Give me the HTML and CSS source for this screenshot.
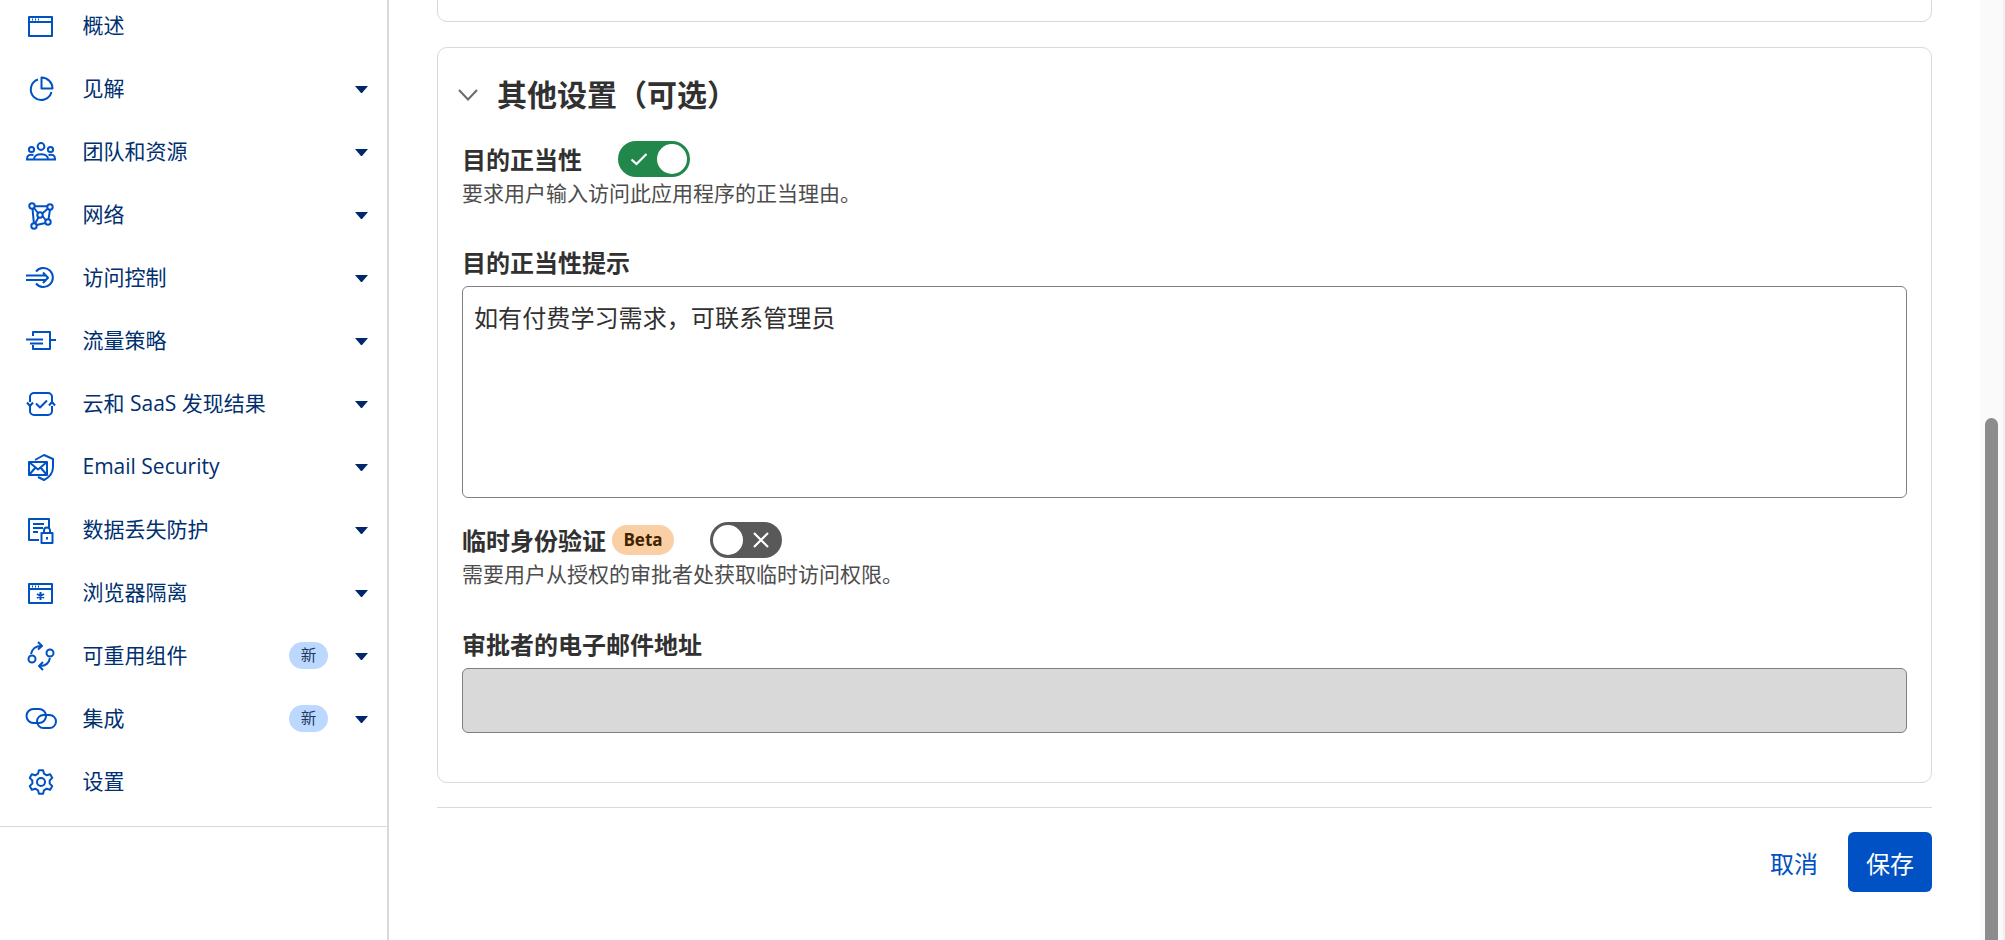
FILE: index.html
```html
<!DOCTYPE html>
<html lang="zh-CN">
<head>
<meta charset="utf-8">
<title>其他设置</title>
<link rel="stylesheet" href="styles.css">
</head>
<body>
<aside class="sidebar">
  <nav class="nav">
    <a class="nav-row"><svg class="nav-icon" viewBox="0 0 32 32"><rect x="4" y="7" width="23" height="19"/><path d="M4 12H27M7 9.500H8M10 9.500H11M13 9.500H14"/></svg><span class="nav-label">概述</span></a>
    <a class="nav-row"><svg class="nav-icon" viewBox="0 0 32 32"><path d="M13 6.500A10.500 10.500 0 1 0 26.500 19"/><path d="M16.500 4.500A11 11 0 0 1 27.500 15.500H16.500Z"/></svg><span class="nav-label">见解</span><i class="caret"></i></a>
    <a class="nav-row"><svg class="nav-icon" viewBox="0 0 32 32"><circle cx="16" cy="10.500" r="3.400"/><circle cx="6.500" cy="13.500" r="2.600"/><circle cx="25.500" cy="13.500" r="2.600"/><path d="M1 23.500H31M9 23C9 16.500 23 16.500 23 23M2 23C2 19 5 18 8.500 19M30 23C30 19 27 18 23.500 19"/></svg><span class="nav-label">团队和资源</span><i class="caret"></i></a>
    <a class="nav-row"><svg class="nav-icon" viewBox="0 0 32 32"><circle cx="7" cy="7" r="2.700"/><circle cx="25" cy="8" r="2.700"/><circle cx="23" cy="23" r="2.700"/><circle cx="9" cy="27" r="2.700"/><circle cx="15" cy="16" r="2.700"/><path d="M9.700 7.200H22.300M7.500 9.700L8.900 24.300M25 10.700L23.500 20.300M11.500 26L20.500 24M9 9L13 14M17.200 14.500L23 9.500M17.500 17L21 21.500M13.500 18.500L10 24.500"/></svg><span class="nav-label">网络</span><i class="caret"></i></a>
    <a class="nav-row"><svg class="nav-icon" viewBox="0 0 32 32"><path d="M11 9.500A9.500 9.500 0 1 1 11 21.500"/><path d="M1 13.500H21.500M1 18H21.500M18 10.500L23 15.700L18 21"/></svg><span class="nav-label">访问控制</span><i class="caret"></i></a>
    <a class="nav-row"><svg class="nav-icon" viewBox="0 0 32 32"><path d="M8 11V7H25V24H8V20M25 15H31M1 14.500H18M5 18.500H18"/></svg><span class="nav-label">流量策略</span><i class="caret"></i></a>
    <a class="nav-row"><svg class="nav-icon" viewBox="0 0 32 32"><path d="M5 14V9A4 4 0 0 1 9 5H23A4 4 0 0 1 27 9V14M5 18V23A4 4 0 0 0 9 27H23A4 4 0 0 0 27 23V18M2 14.500L5 18L8 14.500M24 17.500L27 14L30 17.500M11 15.500L15 19.500L22 12.500"/></svg><span class="nav-label">云和 SaaS 发现结果</span><i class="caret"></i></a>
    <a class="nav-row"><svg class="nav-icon" viewBox="0 0 32 32"><path d="M10 9L19 4L28 8V16C28 23 23 27 19 29L13 26"/><rect x="4" y="11" width="18" height="13"/><path d="M4 11L13 18.500L22 11M4 24L10.500 16.500M22 24L15.500 16.500"/></svg><span class="nav-label">Email Security</span><i class="caret"></i></a>
    <a class="nav-row"><svg class="nav-icon" viewBox="0 0 32 32"><path d="M14 26H4V5H24V15M8 10H19M8 14H18M8 18H13"/><rect x="16.500" y="19" width="11" height="10"/><path d="M19 19V16.500A3 3 0 0 1 25 16.500V19M22 23V25.500"/></svg><span class="nav-label">数据丢失防护</span><i class="caret"></i></a>
    <a class="nav-row"><svg class="nav-icon" viewBox="0 0 32 32"><rect x="4" y="7" width="23" height="19"/><path d="M4 12H27M7 9.500H8M10 9.500H11M13 9.500H14M15.500 15V23M12 17L19 21M19 17L12 21"/></svg><span class="nav-label">浏览器隔离</span><i class="caret"></i></a>
    <a class="nav-row"><svg class="nav-icon" viewBox="0 0 32 32"><circle cx="7" cy="19" r="3.500"/><circle cx="25" cy="13" r="3.500"/><path d="M6 14C7 9 11 6 16 6M13 2L17 6L13 9.500M25 18C24 23 21 26 15 26M18 22L14 26L18 30"/></svg><span class="nav-label">可重用组件</span><span class="new-badge">新</span><i class="caret"></i></a>
    <a class="nav-row"><svg class="nav-icon" viewBox="0 0 32 32"><rect x="1.500" y="6" width="19.500" height="14" rx="7"/><rect x="12" y="12" width="19" height="13" rx="6.500"/></svg><span class="nav-label">集成</span><span class="new-badge">新</span><i class="caret"></i></a>
    <a class="nav-row"><svg class="nav-icon" viewBox="0 0 32 32"><polygon points="13,7.730 13.920,4.180 18.080,4.180 19,7.730 21.660,9.260 25.190,8.280 27.280,11.900 24.670,14.470 24.670,17.530 27.280,20.100 25.190,23.710 21.660,22.740 19,24.270 18.080,27.820 13.920,27.820 13,24.270 10.340,22.740 6.810,23.710 4.720,20.100 7.330,17.530 7.330,14.470 4.720,11.900 6.810,8.280 10.340,9.260"/><circle cx="16" cy="16" r="4"/></svg><span class="nav-label">设置</span></a>
  </nav>
</aside>
<main class="main">
  <div class="card card-prev"></div>
  <section class="card">
    <header class="card-head">
      <svg class="chevron" viewBox="0 0 20 12"><path d="M1 1L10 10.500L19 1"/></svg>
      <h2 class="card-title">其他设置（可选）</h2>
    </header>
    <div class="toggle-row toggle-row-first">
      <span class="field-label">目的正当性</span>
      <span class="toggle toggle-on">
        <svg class="toggle-mark" viewBox="0 0 16 16"><path d="M0.500 8.500L5.500 13L15.500 3"/></svg>
        <i class="knob"></i>
      </span>
    </div>
    <p class="help">要求用户输入访问此应用程序的正当理由。</p>
    <label class="field-label field-block">目的正当性提示</label>
    <textarea class="textarea" readonly>如有付费学习需求，可联系管理员</textarea>
    <div class="toggle-row">
      <span class="field-label">临时身份验证</span>
      <span class="beta">Beta</span>
      <span class="toggle toggle-off">
        <i class="knob"></i>
        <svg class="toggle-mark" viewBox="0 0 16 16"><path d="M1 1L15 15M15 1L1 15"/></svg>
      </span>
    </div>
    <p class="help">需要用户从授权的审批者处获取临时访问权限。</p>
    <label class="field-label field-block field-block-email">审批者的电子邮件地址</label>
    <input class="input" type="text" disabled>
  </section>
  <div class="rule"></div>
  <footer class="actions">
    <a class="cancel">取消</a>
    <button class="save" type="button">保存</button>
  </footer>
</main>
<div class="scroll-track"><div class="scroll-thumb"></div></div>
</body>
</html>
```
FILE: styles.css
```css
* { box-sizing: border-box; }
html, body { height: 100%; }
body {
  margin: 0;
  height: 940px;
  overflow: hidden;
  display: flex;
  background: #fff;
  color: #313131;
  font-family: "Open Sans", "Noto Sans CJK SC", sans-serif;
  font-size: 21px;
}
.sidebar {
  flex: 0 0 389px;
  height: 940px;
  border-right: 2px solid #d9d9d9;
  overflow: hidden;
}
.nav {
  margin-top: -6px;
  padding-bottom: 13px;
  border-bottom: 1px solid #d9d9d9;
}
.nav-row {
  height: 63px;
  padding: 0 19px 0 25px;
  display: flex;
  align-items: center;
  color: #00306f;
}
.nav-icon {
  flex: 0 0 32px;
  width: 32px;
  height: 32px;
  margin-right: 25.500px;
  fill: none;
  stroke: #0051c3;
  stroke-width: 2;
  stroke-linejoin: round;
}
.nav-label {
  flex: 1;
  padding-bottom: 2px;
  white-space: nowrap;
  line-height: 28px;
}
.caret {
  flex: 0 0 13px;
  height: 0;
  margin-top: 2px;
  border-left: 6.500px solid transparent;
  border-right: 6.500px solid transparent;
  border-top: 7px solid #00266b;
}
.new-badge {
  width: 39px;
  height: 27px;
  margin-right: 27px;
  border-radius: 14px;
  background: #bcd8ff;
  color: #1f3a5f;
  font-size: 15.600px;
  line-height: 27px;
  text-align: center;
}
.main {
  flex: 1;
  min-width: 0;
  padding: 0 48px;
}
.card {
  height: 736px;
  margin-bottom: 24px;
  padding: 27px 24px 0;
  border: 1px solid #d9d9d9;
  border-radius: 10px;
}
.card-prev {
  height: 42px;
  margin-top: -20px;
  margin-bottom: 25px;
  padding: 0;
}
.card-head {
  height: 40px;
  display: flex;
  align-items: center;
}
.chevron {
  width: 20px;
  height: 12px;
  margin: 0 0 0 -4px;
  fill: none;
  stroke: #6a6a6a;
  stroke-width: 2;
}
.card-title {
  margin: 0 0 0 19px;
  font-size: 30px;
  line-height: 40px;
  font-weight: 700;
}
.toggle-row {
  height: 36px;
  margin-top: 24px;
  display: flex;
  align-items: center;
}
.toggle-row .field-label { padding-top: 2px; }
.toggle-row-first { margin-top: 26px; }
.field-label {
  font-size: 24px;
  line-height: 32px;
  font-weight: 700;
}
.field-block {
  display: block;
  margin-top: 40px;
  margin-bottom: 7px;
}
.field-block-email { margin-top: 41px; margin-bottom: 7px; }
.help {
  margin: 2px 0 0;
  font-size: 21px;
  line-height: 28px;
  color: #4d4d4d;
}
.toggle {
  width: 72px;
  height: 36px;
  margin-left: 36px;
  padding: 0 3px;
  border-radius: 18px;
  display: flex;
  align-items: center;
}
.toggle-on { background: #22874a; padding-left: 13px; justify-content: space-between; }
.toggle-off { background: #595959; padding-right: 13px; justify-content: space-between; }
.toggle-mark {
  width: 16px;
  height: 16px;
  fill: none;
  stroke: #fff;
  stroke-width: 2.200;
}
.knob {
  width: 30px;
  height: 30px;
  border-radius: 50%;
  background: #fff;
}
.beta {
  width: 62px;
  height: 30px;
  margin-left: 6px;
  border-radius: 15px;
  background: #fbcfa4;
  color: #3f2200;
  font-size: 17px;
  font-weight: 700;
  line-height: 30px;
  text-align: center;
}
.beta + .toggle { margin-left: 36px; }
.textarea, .input {
  display: block;
  width: 100%;
  border: 1px solid #808080;
  border-radius: 6px;
  outline: none;
  color: #313131;
  font-family: inherit;
}
.textarea {
  height: 212px;
  padding: 11px 11px;
  background: #fff;
  font-size: 24.100px;
  line-height: 40px;
  resize: none;
}
.input {
  height: 65px;
  background: #d9d9d9;
}
.rule { height: 1px; background: #d9d9d9; }
.actions {
  margin-top: 24px;
  display: flex;
  justify-content: flex-end;
  align-items: center;
  gap: 30px;
  font-size: 24px;
}
.cancel { color: #0051c3; }
.save {
  width: 84px;
  height: 60px;
  border: 0;
  border-radius: 6px;
  background: #0051c3;
  color: #fff;
  font-family: inherit;
  font-size: 24px;
}
.scroll-track {
  flex: 0 0 25px;
  height: 940px;
  background: #fafafa;
  border-right: 2px solid #f0f0f0;
  padding: 418px 0 0 5px;
}
.scroll-thumb {
  width: 13px;
  height: 522px;
  background: #8c8c8c;
  border-radius: 7px 7px 0 0;
}
```
